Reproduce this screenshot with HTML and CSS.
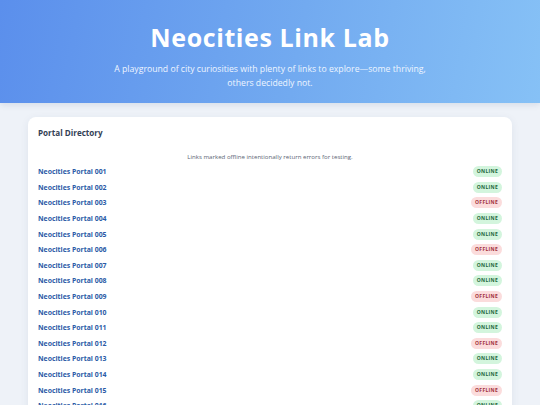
FILE: index.html
```html
<!DOCTYPE html>
<html>
<head>
<meta charset="utf-8">
<link rel="stylesheet" href="styles.css">
</head>
<body>
<header class="hero">
  <h1 class="hero-title">Neocities Link Lab</h1>
  <p class="hero-sub">A playground of city curiosities with plenty of links to explore—some thriving, others decidedly not.</p>
</header>
<main class="wrap">
  <section class="card">
    <h2 class="card-title">Portal Directory</h2>
    <p class="note">Links marked offline intentionally return errors for testing.</p>
    <ul class="list">
      <li class="row"><a class="link" href="#">Neocities Portal 001</a><span class="badge on">ONLINE</span></li>
      <li class="row"><a class="link" href="#">Neocities Portal 002</a><span class="badge on">ONLINE</span></li>
      <li class="row"><a class="link" href="#">Neocities Portal 003</a><span class="badge off">OFFLINE</span></li>
      <li class="row"><a class="link" href="#">Neocities Portal 004</a><span class="badge on">ONLINE</span></li>
      <li class="row"><a class="link" href="#">Neocities Portal 005</a><span class="badge on">ONLINE</span></li>
      <li class="row"><a class="link" href="#">Neocities Portal 006</a><span class="badge off">OFFLINE</span></li>
      <li class="row"><a class="link" href="#">Neocities Portal 007</a><span class="badge on">ONLINE</span></li>
      <li class="row"><a class="link" href="#">Neocities Portal 008</a><span class="badge on">ONLINE</span></li>
      <li class="row"><a class="link" href="#">Neocities Portal 009</a><span class="badge off">OFFLINE</span></li>
      <li class="row"><a class="link" href="#">Neocities Portal 010</a><span class="badge on">ONLINE</span></li>
      <li class="row"><a class="link" href="#">Neocities Portal 011</a><span class="badge on">ONLINE</span></li>
      <li class="row"><a class="link" href="#">Neocities Portal 012</a><span class="badge off">OFFLINE</span></li>
      <li class="row"><a class="link" href="#">Neocities Portal 013</a><span class="badge on">ONLINE</span></li>
      <li class="row"><a class="link" href="#">Neocities Portal 014</a><span class="badge on">ONLINE</span></li>
      <li class="row"><a class="link" href="#">Neocities Portal 015</a><span class="badge off">OFFLINE</span></li>
      <li class="row"><a class="link" href="#">Neocities Portal 016</a><span class="badge on">ONLINE</span></li>
      <li class="row"><a class="link" href="#">Neocities Portal 017</a><span class="badge on">ONLINE</span></li>
    </ul>
  </section>
</main>
</body>
</html>
```
FILE: styles.css
```css
* { box-sizing: border-box; }
html, body { margin: 0; padding: 0; }
body {
  font-family: "Open Sans", "Noto Sans", sans-serif;
  background: #eef2f8;
  color: #334155;
}
.hero {
  height: 103px;
  background: linear-gradient(100deg, #5b8fec 0%, #72aaf0 55%, #86c1f6 100%);
  color: #fff;
  text-align: center;
  padding-top: 19px;
  box-shadow: 0 2px 6px rgba(40, 70, 120, 0.12);
}
.hero-title {
  margin: 0;
  font-size: 25px;
  font-weight: 700;
  letter-spacing: 0.6px;
  line-height: 36px;
}
.hero-sub {
  margin: 7px auto 0;
  width: 316px;
  font-size: 8.7px;
  line-height: 14px;
  color: #eef5ff;
}
.wrap {
  padding: 14px 28px 0;
}
.card {
  background: #fff;
  border-radius: 8px;
  padding: 9px 10px 0;
  box-shadow: 0 2px 8px rgba(40, 60, 100, 0.08);
}
.card-title {
  margin: 0;
  font-size: 8.1px;
  font-weight: 700;
  line-height: 14px;
  color: #334155;
}
.note {
  margin: 12px 0 0;
  text-align: center;
  font-size: 6.1px;
  line-height: 10px;
  color: #5b6575;
}
.list {
  list-style: none;
  margin: 2px 0 0;
  padding: 0;
}
.row {
  display: flex;
  justify-content: space-between;
  align-items: center;
  height: 15.6px;
}
.link {
  font-size: 6.9px;
  font-weight: 700;
  color: #2b5aa6;
  text-decoration: none;
}
.badge {
  font-size: 5px;
  font-weight: 700;
  letter-spacing: 0.3px;
  padding: 2px 4px;
  border-radius: 8px;
  line-height: 7px;
}
.badge.on { background: #d3f5dd; color: #22663a; }
.badge.off { background: #fbdcdc; color: #a12f3a; }
```
